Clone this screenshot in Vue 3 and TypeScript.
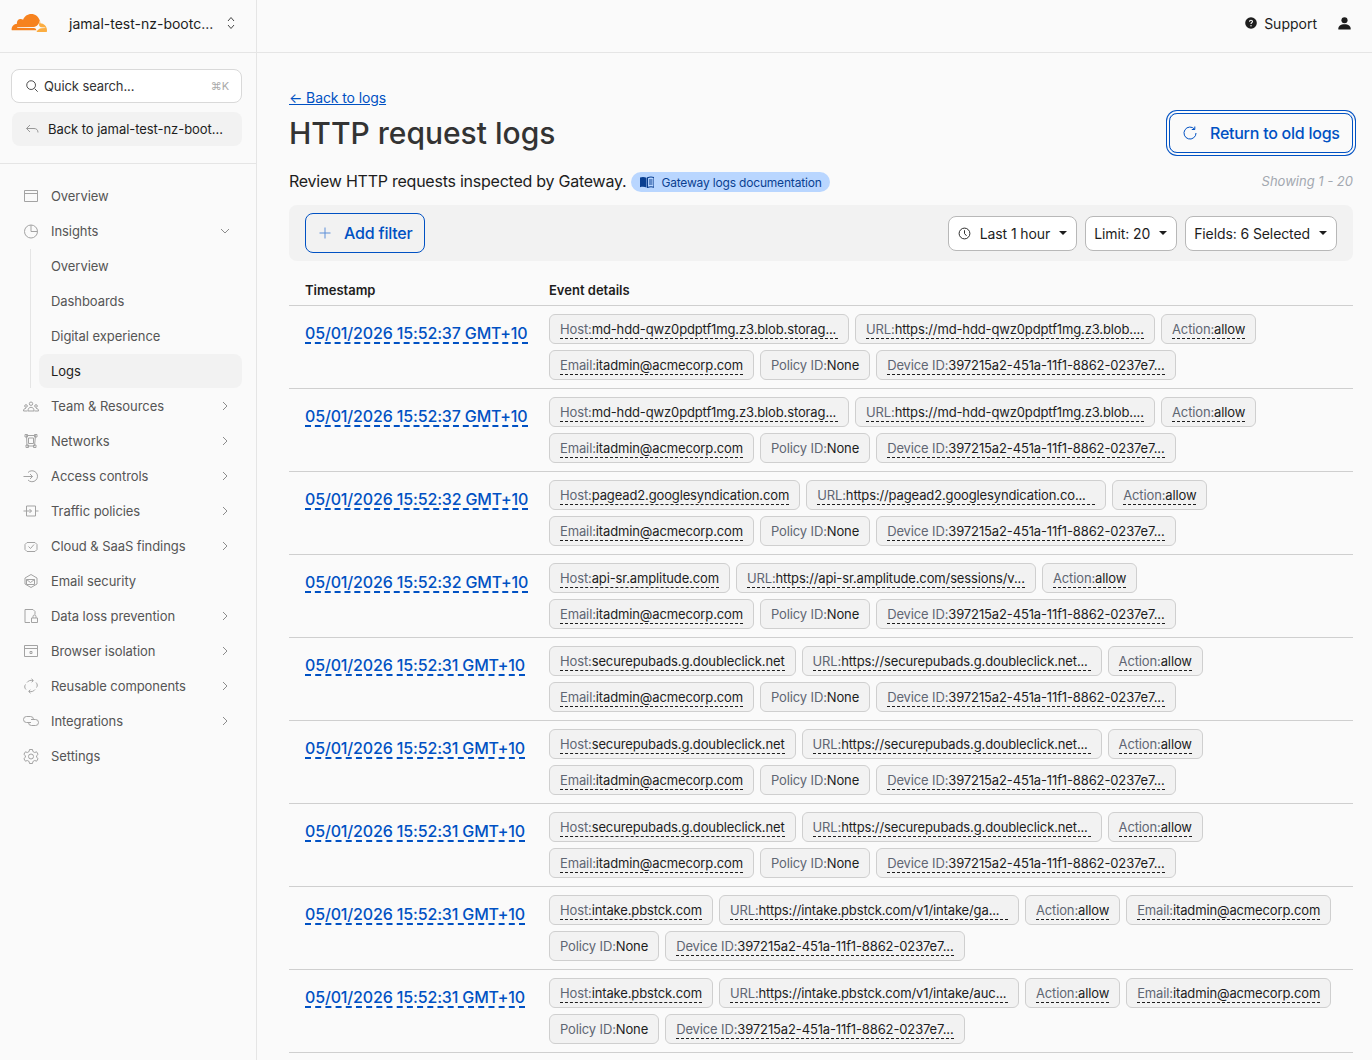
<template>
  <div class="app">
    <aside class="sidebar">
      <div class="account">
        <svg class="logo" viewBox="0 0 36 18" width="36" height="18">
          <path fill="#f6821f" d="M25.2 17.6c.3-1 .2-1.9-.3-2.6-.5-.6-1.2-1-2.1-1L6.5 13.8c-.1 0-.2-.1-.3-.1 0-.1 0-.2 0-.3 0-.2.2-.3.3-.3l16.5-.2c2-.1 4.1-1.700 4.900-3.600l.9-2.500c0-.1 0-.2 0-.3C27.700 2.700 24.200 0 20.300 0c-3.800 0-7 2.400-8.200 5.800-.7-.6-1.700-.9-2.800-.8-1.800.2-3.200 1.600-3.400 3.400 0 .5 0 .9.100 1.300C3.100 9.800.6 12.200.6 15.300c0 .3 0 .5.100.8 0 .1.100.2.300.2h24c.1 0 .2 0 .2.100z"/>
          <path fill="#fbad41" d="M29.300 7.600h-.4c-.1 0-.2.100-.2.200l-.5 1.800c-.3 1-.2 1.900.3 2.600.5.600 1.200 1 2.100 1l3.500.2c.1 0 .2.100.2.100.1.100.1.200 0 .3 0 .2-.2.300-.3.300l-3.600.2c-2 .1-4.100 1.700-4.900 3.600l-.2.600h10.200c.1 0 .2-.1.200-.2.200-.6.300-1.300.3-2 0-3.900-3.200-7-6.700-7z"/>
        </svg>
        <span class="account-name">jamal-test-nz-bootc...</span>
        <svg class="updown" viewBox="0 0 10 16" width="10" height="16"><path d="M2 6l3-3.500L8 6M2 10l3 3.500L8 10"/></svg>
      </div>
      <div class="side-actions">
        <div class="search">
          <svg viewBox="0 0 16 16" width="14" height="14"><circle cx="7" cy="7" r="5"/><path d="M11 11l3.500 3.500"/></svg>
          <span class="search-text">Quick search...</span>
          <span class="kbd">⌘K</span>
        </div>
        <div class="back-account">
          <svg viewBox="0 0 16 16" width="16" height="16"><path d="M6 4L2.500 7.500 6 11M2.500 7.500H10c2.500 0 4 1.500 4 4"/></svg>
          <span>Back to jamal-test-nz-boot...</span>
        </div>
      </div>
      <nav class="nav">
        <template v-for="item in navItems" :key="item.label">
          <div class="nav-item">
            <svg class="nav-icon" viewBox="0 0 16 16" width="16" height="16">
              <path v-for="d in icons[item.icon]" :key="d" :d="d" />
            </svg>
            <span class="nav-label">{{ item.label }}</span>
            <svg v-if="item.arrow" class="nav-arrow" viewBox="0 0 12 12" width="12" height="12">
              <path :d="item.open ? 'M2 4l4 4 4-4' : 'M4 2l4 4-4 4'" />
            </svg>
          </div>
          <div v-if="item.open" class="sub-nav">
            <div v-for="sub in subItems" :key="sub" class="sub-item" :class="{ active: sub === 'Logs' }">{{ sub }}</div>
          </div>
        </template>
      </nav>
    </aside>

    <div class="content">
      <header class="topbar">
        <svg viewBox="0 0 12 12" width="12" height="12" class="help">
          <circle cx="6" cy="6" r="5.800" fill="#1d1d1d" />
          <path d="M4.500 4.700c0-.9.700-1.400 1.500-1.400s1.500.5 1.500 1.300c0 1.200-1.500 1.100-1.500 2.300" fill="none" stroke="#fafafa" stroke-width="1.100" />
          <circle cx="6" cy="8.800" r=".7" fill="#fafafa" />
        </svg>
        <span class="support">Support</span>
        <svg viewBox="0 0 14 14" width="13" height="13" class="user">
          <circle cx="7" cy="3.500" r="3.300" fill="#1d1d1d" />
          <path d="M1 13.500c-.4 0-.7-.3-.7-.7C.3 9.800 2.800 7.800 7 7.800s6.700 2 6.700 5c0 .4-.3.700-.7.700z" fill="#1d1d1d" />
        </svg>
      </header>

      <main class="main">
        <a class="back-link">← Back to logs</a>
        <div class="title-row">
          <h1>HTTP request logs</h1>
          <button class="return-btn">
            <svg viewBox="0 0 16 16" width="16" height="16"><path d="M12.600 4.200A6 6 0 1 0 14 8M12.800 1.500v3h-3" /></svg>
            Return to old logs
          </button>
        </div>
        <div class="sub-row">
          <span class="subtitle">Review HTTP requests inspected by Gateway.</span>
          <span class="doc-badge">
            <svg viewBox="0 0 14 12" width="14" height="12">
              <path d="M0 1.500C2 .8 4.500.8 6.500 1.800v9.700C4.500 10.600 2 10.600 0 11.200z" fill="#0a3f91" />
              <path d="M7.500 1.800c2-1 4.500-1 6.500-.3v9.700c-2-.6-4.500-.6-6.500.3zM9 4h3.500M9 6h3.500M9 8h3.500" fill="none" stroke="#0a3f91" stroke-width="1.100" />
            </svg>
            Gateway logs documentation
          </span>
          <span class="showing">Showing 1 - 20</span>
        </div>

        <div class="filter-bar">
          <button class="add-filter">
            <svg viewBox="0 0 12 12" width="12" height="12"><path d="M6 .5v11M.5 6h11" /></svg>
            Add filter
          </button>
          <div class="filter-right">
            <button class="select">
              <svg viewBox="0 0 14 14" width="13" height="13" class="clock"><circle cx="7" cy="7" r="5.800" /><path d="M7 3.500V7l2.200 2.500" /></svg>
              Last 1 hour
              <span class="caret"></span>
            </button>
            <button class="select">Limit: 20 <span class="caret"></span></button>
            <button class="select">Fields: 6 Selected <span class="caret"></span></button>
          </div>
        </div>

        <div class="table-head">
          <div class="col-time">Timestamp</div>
          <div>Event details</div>
        </div>
        <div v-for="(row, i) in rows" :key="i" class="row">
          <div class="col-time"><a class="stamp">{{ row.time }}</a></div>
          <div class="pills">
            <div v-for="p in row.pills" :key="p.label" class="pill" :class="{ wide: p.value.endsWith('...') }">
              <span :class="{ dashed: p.label !== 'Policy ID' }"><span class="pill-label">{{ p.label }}:</span>{{ p.value }}</span>
            </div>
          </div>
        </div>
      </main>
    </div>
  </div>
</template>

<script setup lang="ts">
interface NavItem {
  label: string;
  icon: string;
  arrow?: boolean;
  open?: boolean;
}

interface Pill {
  label: string;
  value: string;
}

const icons: Record<string, string[]> = {
  window: ['M1.5 2.5h13v11h-13z', 'M1.5 5.5h13'],
  pie: ['M8 2a6.5 6.5 0 1 0 6.5 6.500H8z', 'M8 2a6.5 6.5 0 0 1 6.500 6.500'],
  team: [
    'M6.3 5.7a1.7 1.7 0 1 0 3.4 0 1.7 1.7 0 1 0-3.4 0',
    'M1.7 8a1.3 1.3 0 1 0 2.6 0 1.3 1.3 0 1 0-2.6 0',
    'M11.7 8a1.3 1.3 0 1 0 2.6 0 1.3 1.3 0 1 0-2.600 0',
    'M5 13c0-2.500 1.200-3.700 3-3.700s3 1.200 3 3.700z',
    'M4.500 13H.5c0-1.800 1-2.700 2.500-2.700M11.500 13h4c0-1.800-1-2.700-2.500-2.700',
  ],
  network: ['M3.500 2.500h9l-1 10.500H4z', 'M5.500 5l5 0 0 5.500-5 0z', 'M2 1.500h2.500v2.500H2zM11.500 1.500H14V4h-2.500zM3 12h2.500v2.500H3zM10.500 12H13v2.500h-2.500z'],
  access: ['M5 4.500a5.500 5.500 0 1 1 0 7.500', 'M.5 8.500h9M7 6l2.500 2.500L7 11'],
  traffic: ['M3.500 3h9v10h-9z', 'M.5 8h8M6.500 6l2 2-2 2M12.500 8h3'],
  cloud: ['M4 4.500h8l2 2v5l-2 2H4l-2-2v-5z', 'M5.500 8.500l2 2 3.500-4'],
  email: ['M2 5l6-3.500 6 3.500v6l-6 3.500L2 11z', 'M3.500 6.500h8v5h-8zM3.500 6.500l4 3 4-3'],
  dlp: ['M2 1.500h8l2 2v3M2 1.500v13h5', 'M8.500 10h6v4.500h-6zM10 10V8.500a1.500 1.500 0 0 1 3 0V10'],
  browser: ['M1.500 2.500h13v11h-13z', 'M1.500 5.500h13', 'M7 8.500h2v2H7z'],
  reusable: [
    'M4 4.500C5.500 2.500 7.500 2 10 2.500',
    'M8.500.8l1.800 1.700-1.600 1.800',
    'M12 11.500c-1.500 2-3.500 2.500-6 2',
    'M7.500 15.200l-1.800-1.700 1.600-1.800',
    'M2.500 6.500c-1.200 1.500-1 3.500.5 5M13.500 9.500c1.200-1.500 1-3.500-.5-5',
  ],
  link: ['M8 9.500H3.500a3 3 0 0 1 0-6h4a3 3 0 0 1 3 3', 'M8 6.500h4.500a3 3 0 0 1 0 6h-4a3 3 0 0 1-3-3'],
  gear: ['M6.500 1.500h3l.4 2 1.800 1 1.900-.7 1.500 2.600-1.500 1.300v1.600l1.500 1.300-1.500 2.600-1.900-.7-1.800 1-.4 2h-3l-.4-2-1.800-1-1.900.7L.9 10.600l1.500-1.300V7.700L.9 6.400l1.500-2.600 1.900.7 1.800-1z', 'M8 6a2.500 2.500 0 1 0 0 5 2.500 2.500 0 0 0 0-5z'],
};

const navItems: NavItem[] = [
  { label: 'Overview', icon: 'window' },
  { label: 'Insights', icon: 'pie', arrow: true, open: true },
  { label: 'Team & Resources', icon: 'team', arrow: true },
  { label: 'Networks', icon: 'network', arrow: true },
  { label: 'Access controls', icon: 'access', arrow: true },
  { label: 'Traffic policies', icon: 'traffic', arrow: true },
  { label: 'Cloud & SaaS findings', icon: 'cloud', arrow: true },
  { label: 'Email security', icon: 'email' },
  { label: 'Data loss prevention', icon: 'dlp', arrow: true },
  { label: 'Browser isolation', icon: 'browser', arrow: true },
  { label: 'Reusable components', icon: 'reusable', arrow: true },
  { label: 'Integrations', icon: 'link', arrow: true },
  { label: 'Settings', icon: 'gear' },
];

const subItems = ['Overview', 'Dashboards', 'Digital experience', 'Logs'];

const makeRow = (time: string, host: string, url: string) => {
  const pills: Pill[] = [
    { label: 'Host', value: host },
    { label: 'URL', value: url },
    { label: 'Action', value: 'allow' },
    { label: 'Email', value: 'itadmin@acmecorp.com' },
    { label: 'Policy ID', value: 'None' },
    { label: 'Device ID', value: '397215a2-451a-11f1-8862-0237e7...' },
  ];
  return { time, pills };
};

const blobHost = 'md-hdd-qwz0pdptf1mg.z3.blob.storag...';
const blobUrl = 'https://md-hdd-qwz0pdptf1mg.z3.blob....';
const adsHost = 'securepubads.g.doubleclick.net';
const adsUrl = 'https://securepubads.g.doubleclick.net...';

const rows = [
  makeRow('05/01/2026 15:52:37 GMT+10', blobHost, blobUrl),
  makeRow('05/01/2026 15:52:37 GMT+10', blobHost, blobUrl),
  makeRow('05/01/2026 15:52:32 GMT+10', 'pagead2.googlesyndication.com', 'https://pagead2.googlesyndication.co...'),
  makeRow('05/01/2026 15:52:32 GMT+10', 'api-sr.amplitude.com', 'https://api-sr.amplitude.com/sessions/v...'),
  makeRow('05/01/2026 15:52:31 GMT+10', adsHost, adsUrl),
  makeRow('05/01/2026 15:52:31 GMT+10', adsHost, adsUrl),
  makeRow('05/01/2026 15:52:31 GMT+10', adsHost, adsUrl),
  makeRow('05/01/2026 15:52:31 GMT+10', 'intake.pbstck.com', 'https://intake.pbstck.com/v1/intake/ga...'),
  makeRow('05/01/2026 15:52:31 GMT+10', 'intake.pbstck.com', 'https://intake.pbstck.com/v1/intake/auc...'),
];
</script>

<style>
html,
body {
  margin: 0;
  background: #fafafa;
}
</style>

<style scoped>
.app {
  display: flex;
  height: 1060px;
  overflow: hidden;
  background: #fafafa;
  color: #1d1d1d;
  font-family: Inter, "Liberation Sans", sans-serif;
  font-size: 13px;
}

svg {
  flex: none;
  fill: none;
  stroke: currentColor;
}

.sidebar {
  width: 256px;
  flex: none;
  border-right: 1px solid #e5e5e5;
}

.account {
  display: flex;
  align-items: center;
  box-sizing: content-box;
  height: 46px;
  padding: 0 20px 6px 11px;
  border-bottom: 1px solid #e5e5e5;
}

.logo {
  stroke: none;
}

.account-name {
  margin-left: 22px;
  flex: 1;
  font-size: 14px;
}

.updown {
  color: #444;
}

.side-actions {
  display: flex;
  flex-direction: column;
  gap: 9px;
  padding: 16px 14px 17px 11px;
  border-bottom: 1px solid #e5e5e5;
}

.search {
  display: flex;
  align-items: center;
  gap: 5px;
  height: 32px;
  padding: 0 12px 0 13px;
  background: #fff;
  border: 1px solid #d9d9d9;
  border-radius: 8px;
  color: #333;
  letter-spacing: -0.1px;
}

.search-text {
  flex: 1;
}

.kbd {
  font-size: 11px;
  color: #aaa;
}

.back-account {
  display: flex;
  align-items: center;
  gap: 8px;
  height: 34px;
  margin-left: 1px;
  padding: 0 12px;
  background: #f2f2f2;
  border-radius: 8px;
  white-space: nowrap;
  letter-spacing: -0.05px;
}

.back-account svg {
  color: #999;
}

.nav {
  display: flex;
  flex-direction: column;
  gap: 1px;
  padding: 15px 14px 0 23px;
  letter-spacing: -0.07px;
}

.nav-item {
  display: flex;
  align-items: center;
  height: 34px;
  color: #555;
}

.nav-icon {
  color: #a3a3a3;
  stroke-width: 1;
}

.nav-label {
  flex: 1;
  margin-left: 12px;
}

.nav-arrow {
  margin-right: 11px;
  color: #8c8c8c;
  stroke-width: 1;
}

.sub-nav {
  display: flex;
  flex-direction: column;
  gap: 1px;
  margin-left: 7px;
  padding-left: 8px;
  border-left: 1px solid #e5e5e5;
}

.sub-item {
  display: flex;
  align-items: center;
  height: 34px;
  padding-left: 12px;
  border-radius: 8px;
  color: #555;
}

.sub-item.active {
  background: #f2f2f2;
  color: #1d1d1d;
}

.content {
  flex: 1;
  min-width: 0;
}

.topbar {
  display: flex;
  align-items: center;
  justify-content: flex-end;
  box-sizing: content-box;
  height: 46px;
  padding: 0 21px 6px 0;
  border-bottom: 1px solid #e5e5e5;
}

.help,
.user {
  stroke: none;
}

.support {
  margin: 0 21px 0 7px;
  font-size: 14px;
}

.main {
  padding: 36px 19px 0 32px;
}

.back-link {
  display: block;
  color: #0051c3;
  text-decoration: underline;
  font-size: 14px;
  letter-spacing: -0.1px;
  line-height: 17px;
}

.title-row {
  display: flex;
  align-items: center;
  justify-content: space-between;
  margin-top: 7px;
}

h1 {
  margin: 0;
  font-size: 30px;
  font-weight: 500;
  line-height: 40px;
  color: #333;
}

.return-btn {
  display: flex;
  align-items: center;
  gap: 12px;
  width: 184px;
  height: 40px;
  padding: 0 12px;
  background: transparent;
  border: 1px solid #0051c3;
  border-radius: 8px;
  box-shadow: 0 0 0 2px #fafafa, 0 0 0 3px #0051c3;
  color: #0051c3;
  font: 500 16px Inter, sans-serif;
  letter-spacing: -0.25px;
  white-space: nowrap;
}

.sub-row {
  display: flex;
  align-items: center;
  height: 20px;
  margin-top: 19px;
}

.subtitle {
  font-size: 16px;
  letter-spacing: -0.24px;
  margin-bottom: 2px;
}

.doc-badge {
  display: inline-flex;
  align-items: center;
  gap: 7px;
  height: 20px;
  margin-left: 5px;
  padding: 0 8px 0 9px;
  background: #b9d6ff;
  border-radius: 10px;
  color: #0a3f91;
  font-size: 12px;
  letter-spacing: -0.18px;
}

.doc-badge svg {
  stroke: none;
}

.showing {
  margin-left: auto;
  margin-bottom: 2px;
  color: #a3a8b0;
  font-style: italic;
}

.filter-bar {
  display: flex;
  align-items: center;
  justify-content: space-between;
  height: 56px;
  margin-top: 13px;
  padding: 0 16px;
  background: #f2f2f2;
  border-radius: 8px;
}

.add-filter {
  display: flex;
  align-items: center;
  gap: 13px;
  height: 40px;
  padding: 0 11px 0 13px;
  background: transparent;
  border: 1px solid #0051c3;
  border-radius: 8px;
  color: #0051c3;
  font: 500 16px Inter, sans-serif;
  letter-spacing: -0.2px;
}

.add-filter svg {
  color: #5c8fd8;
}

.filter-right {
  display: flex;
  gap: 8px;
}

.select {
  display: flex;
  align-items: center;
  height: 35px;
  padding: 0 8px;
  background: #fff;
  border: 1px solid #b8b8b8;
  border-radius: 8px;
  color: #1d1d1d;
  font: 14px Inter, sans-serif;
  letter-spacing: -0.1px;
  white-space: nowrap;
}

.clock {
  margin: 0 9px 0 1px;
}

.caret {
  width: 0;
  height: 0;
  margin: 0 1px 0 9px;
  border-left: 4.500px solid transparent;
  border-right: 4.500px solid transparent;
  border-top: 4.500px solid #1d1d1d;
}

.table-head {
  display: flex;
  align-items: flex-end;
  height: 45px;
  padding-bottom: 7px;
  box-sizing: border-box;
  border-bottom: 1px solid #cfcfcf;
  font-weight: 600;
}

.col-time {
  width: 260px;
  flex: none;
  padding-left: 16px;
  box-sizing: border-box;
}

.row {
  display: flex;
  padding: 8px 0;
  border-bottom: 1px solid #cfcfcf;
}

.stamp {
  display: inline-block;
  margin-top: 10px;
  color: #0051c3;
  font-size: 16px;
  font-weight: 500;
  letter-spacing: -0.15px;
  line-height: 18px;
  border-bottom: 2px dashed #0051c3;
}

.pills {
  display: flex;
  flex: 1;
  flex-wrap: wrap;
  gap: 6px;
  min-width: 0;
  padding-right: 16px;
  letter-spacing: -0.13px;
}

.pill {
  display: flex;
  align-items: center;
  height: 30px;
  padding: 0 10px;
  box-sizing: border-box;
  background: #f2f2f2;
  border: 1px solid #cfcfcf;
  border-radius: 6px;
  white-space: nowrap;
}

.pill.wide {
  width: 300px;
}

.pill.wide > span {
  flex: 1;
}

.dashed {
  margin-top: 2px;
  border-bottom: 1px dashed #1d1d1d;
  line-height: 17px;
}

.pill-label {
  color: #5f6673;
}
</style>
